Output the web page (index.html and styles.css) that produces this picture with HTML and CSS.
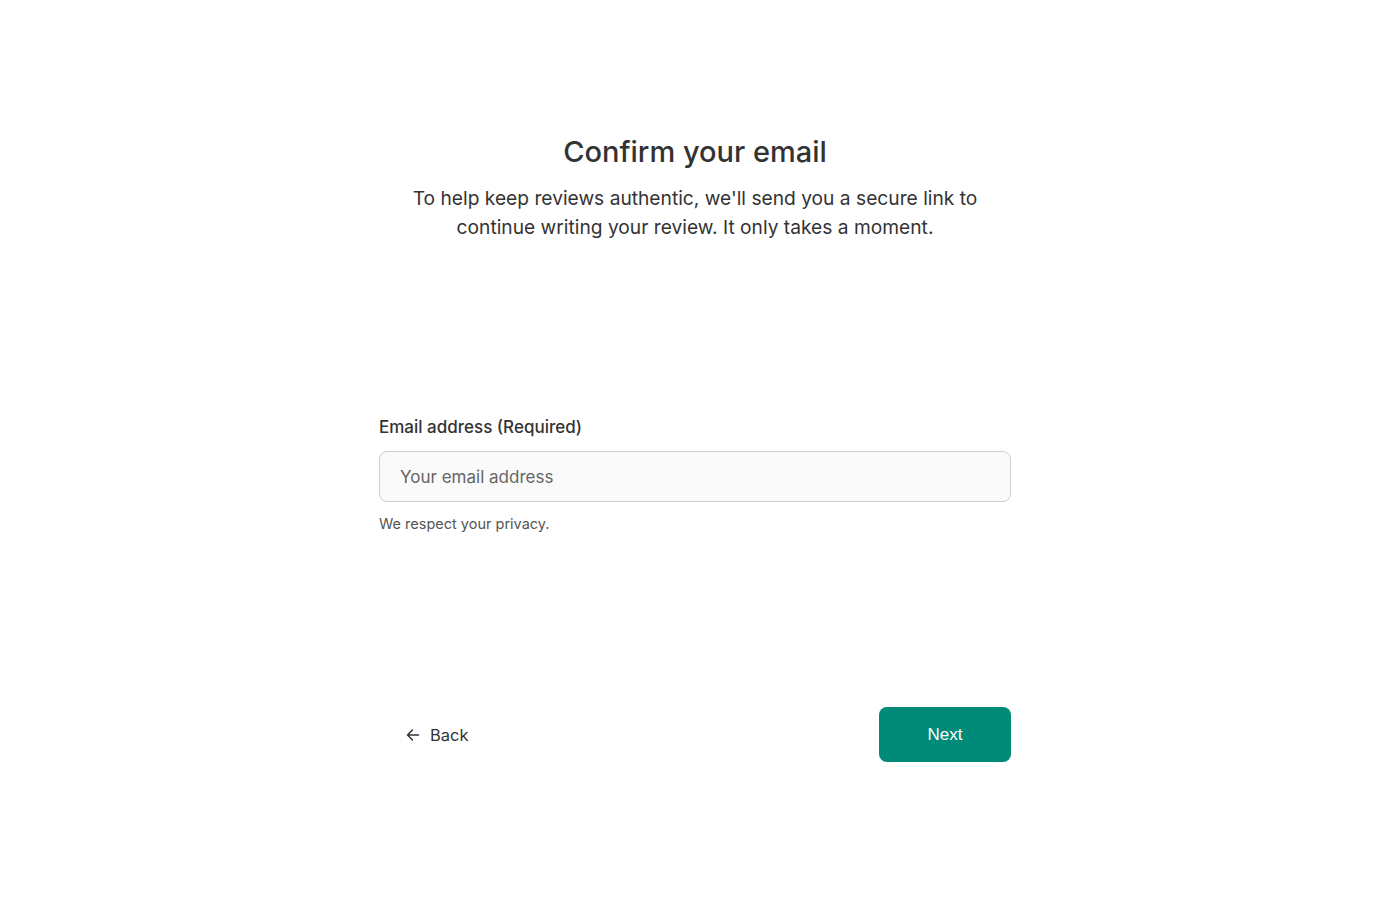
FILE: index.html
```html
<!DOCTYPE html>
<html lang="en">
<head>
<meta charset="utf-8">
<title>Confirm your email</title>
<link rel="stylesheet" href="styles.css">
</head>
<body>
<main class="page">
  <header class="intro">
    <h1 class="title">Confirm your email</h1>
    <p class="subtitle">To help keep reviews authentic, we'll send you a secure link to continue writing your review. It only takes a moment.</p>
  </header>
  <form class="form">
    <label class="label" for="email">Email address (Required)</label>
    <input class="input" id="email" type="email" placeholder="Your email address">
    <p class="hint">We respect your privacy.</p>
  </form>
  <nav class="actions">
    <button class="back" type="button">
      <svg class="back-icon" width="16" height="16" viewBox="0 0 16 16" fill="none" stroke="#333" stroke-width="1.5" stroke-linecap="round" stroke-linejoin="round"><path d="M13.5 8H2.5M7.5 3L2.5 8L7.5 13"/></svg>
      <span>Back</span>
    </button>
    <button class="next" type="button">Next</button>
  </nav>
</main>
</body>
</html>
```
FILE: styles.css
```css
html, body { margin: 0; padding: 0; background: #fff; }
body {
  font-family: Inter, "Noto Sans", sans-serif;
  color: #333;
  padding-right: 10px;
}
.page {
  width: 632px;
  margin: 0 auto;
  padding-top: 133px;
}
.intro {
  text-align: center;
  display: flex;
  flex-direction: column;
  align-items: center;
}
.title {
  margin: 0;
  font-size: 29px;
  font-weight: 500;
  line-height: 38px;
  color: #333;
}
.subtitle {
  margin: 13px 0 0;
  width: 600px;
  font-size: 19.2px;
  line-height: 29px;
  color: #333;
}
.form {
  margin-top: 173px;
  display: flex;
  flex-direction: column;
}
.label {
  font-size: 17px;
  line-height: 24px;
  font-weight: 500;
  color: #333;
}
.input {
  margin-top: 12px;
  height: 51px;
  box-sizing: border-box;
  border: 1px solid #cfcfcf;
  border-radius: 8px;
  background: #fafafa;
  padding: 0 20px;
  font-family: Inter, sans-serif;
  font-size: 17px;
  color: #333;
  outline: none;
}
.input::placeholder { color: #666; }
.hint {
  margin: 12px 0 0;
  font-size: 14.5px;
  line-height: 20px;
  color: #555;
}
.actions {
  margin-top: 173px;
  display: flex;
  justify-content: space-between;
  align-items: center;
}
.back {
  display: flex;
  align-items: center;
  gap: 9px;
  background: none;
  border: 0;
  padding: 0 0 0 26px;
  font-family: Inter, sans-serif;
  font-size: 16.5px;
  color: #333;
  cursor: pointer;
}
.back-icon { display: block; }
.next {
  width: 132px;
  height: 55px;
  border: 0;
  border-radius: 8px;
  background: #008a78;
  color: #fff;
  font-family: "Liberation Sans", Arial, sans-serif;
  font-size: 17px;
  cursor: pointer;
}
```
